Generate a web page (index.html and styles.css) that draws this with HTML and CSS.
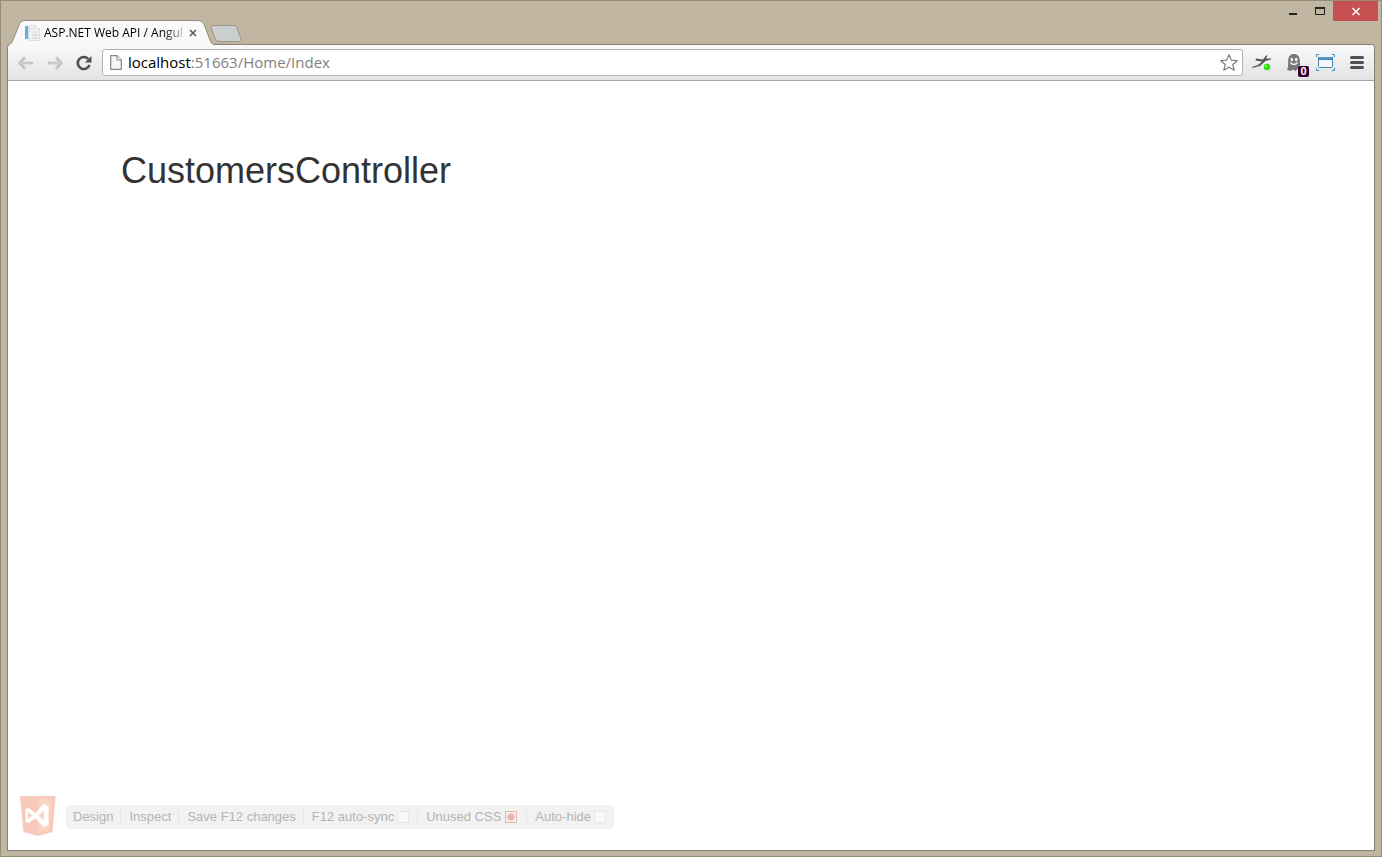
FILE: index.html
```html
<!DOCTYPE html>
<html lang="en">
<head>
<meta charset="utf-8">
<title>ASP.NET Web API / Angular</title>
<link rel="stylesheet" href="styles.css">
</head>
<body>
<div class="window">
  <header class="titlebar">
    <div class="tab">
      <svg class="tab-shape" viewBox="0 0 206 25" width="206" height="25" aria-hidden="true">
        <path d="M0 25C3 24 4 23 5 20L11 5Q12.500 .5 17 .5H190Q194.500 .5 196 4L202 20Q203 24 206 24.500V25Z" fill="#f9f9f9"/>
        <path d="M0 24.500C3 24 4 23 5 20L11 5Q12.500 .5 17 .5H190Q194.500 .5 196 4L202 20Q203 24 206 24.500" fill="none" stroke="#918a78"/>
      </svg>
      <svg class="favicon" viewBox="0 0 16 16" width="16" height="16" aria-hidden="true">
        <path d="M1 1H4V14H1Z" fill="#6aaed5"/><path d="M4 1h2v13H4z" fill="#d3e4ed"/>
        <path d="M5.500 .5H11.500V3.500H15.500V15.500H5.500Z" fill="#f1f1f1" stroke="#dedede"/>
        <path d="M7 4h3M8 7h6" stroke="#d8dadb"/><path d="M8 10h6M8 13h6" stroke="#c4c8ca"/><path d="M6 7v6" stroke="#fff"/>
      </svg>
      <span class="tab-title">ASP.NET Web API / Angul</span>
      <button class="tab-close" aria-label="Close tab"><svg viewBox="0 0 8 8" width="8" height="8"><path d="M1 1L7 7M7 1L1 7" stroke="#5a5a5a" stroke-width="1.600"/></svg></button>
    </div>
    <button class="new-tab" aria-label="New tab"><svg viewBox="0 0 32 17" width="32" height="17"><path d="M3 .5H23Q26 .5 27 3L31 14Q31.500 16 29.500 16.500H9Q6.500 16.500 5.500 14L1 3Q.5 .5 3 .5Z" fill="#cbcfd0" stroke="#9c9686"/></svg></button>
    <div class="controls">
      <button aria-label="Minimize"><svg viewBox="0 0 10 10" width="10" height="10"><path d="M1 8H9" stroke="#222" stroke-width="2"/></svg></button>
      <button aria-label="Maximize"><svg viewBox="0 0 10 10" width="10" height="10"><path d="M.5 1V8.500H9.500V1" fill="none" stroke="#222"/><path d="M0 2H10" stroke="#222" stroke-width="2"/></svg></button>
      <button class="close" aria-label="Close"><svg viewBox="0 0 10 10" width="10" height="10"><path d="M1.500 2L8.500 9M8.500 2L1.500 9" stroke="#fff" stroke-width="1.500"/></svg></button>
    </div>
  </header>
  <div class="frame">
    <nav class="toolbar">
      <button class="nav" aria-label="Back"><svg viewBox="0 0 16 14" width="16" height="14"><path d="M7 1.500L1.700 7L7 12.500M2 7H15" fill="none" stroke="#b8b8b8" stroke-width="2.600"/><path d="M7 2L2.200 7L7 12M3 7H14.500" fill="none" stroke="#dadada" stroke-width="1"/></svg></button>
      <button class="nav" aria-label="Forward"><svg viewBox="0 0 16 14" width="16" height="14"><path d="M9 1.500L14.300 7L9 12.500M14 7H1" fill="none" stroke="#b8b8b8" stroke-width="2.600"/><path d="M9 2L13.800 7L9 12M13 7H1.500" fill="none" stroke="#dadada" stroke-width="1"/></svg></button>
      <button class="nav" aria-label="Reload"><svg viewBox="0 0 16 16" width="16" height="16"><path d="M12.300 4A6 6 0 1 0 13.500 10" fill="none" stroke="#505050" stroke-width="2.600"/><path d="M15.500 1V7.500H8.800Z" fill="#505050"/></svg></button>
      <div class="address">
        <svg viewBox="0 0 12 15" width="12" height="15" aria-hidden="true"><path d="M.7 .7H7L11.300 5V14.300H.7Z" fill="#f7f7f7" stroke="#858585" stroke-width="1.200"/><path d="M7 .7V5H11.300" fill="#fff" stroke="#858585"/></svg>
        <a class="url" href="#"><span class="host">localhost</span>:51663/Home/Index</a>
        <button class="star" aria-label="Bookmark"><svg viewBox="0 0 18 17" width="18" height="17"><path d="M9 .8L11.400 6.200L17.300 6.700L12.800 10.500L14.200 16.300L9 13.200L3.800 16.300L5.200 10.500L.7 6.700L6.600 6.200Z" fill="#fff" stroke="#7d7d7d" stroke-width="1.200" stroke-linejoin="round"/></svg></button>
      </div>
      <div class="extensions">
        <button aria-label="Extension"><svg viewBox="0 0 20 18" width="20" height="18"><path d="M0 13L6 11L10 7.500L3.500 6.500L4 4.500L11 5.600L14 1.500H15.500L14 4.500L19 4.500V5.500L13.500 7L8 12L0 14Z" fill="#555"/><circle cx="15" cy="13" r="3.200" fill="#2ee00c"/><circle cx="14" cy="12.300" r="1" fill="#9bff83"/></svg></button>
        <button class="ghost" aria-label="Ghostery, 0 found"><svg viewBox="0 0 14 17" width="14" height="17"><path d="M0 16C1.500 13 1 10 1.200 6C1.500 2 4 0 7 0S12.500 2 12.800 6C13 10 13 13 14 16L10.500 15L8.500 17L6 15.500L3.500 17Z" fill="#777"/><ellipse cx="4.800" cy="5.500" rx="1.300" ry="1.700" fill="#fff"/><ellipse cx="9.200" cy="5.500" rx="1.300" ry="1.700" fill="#fff"/><path d="M3.500 8.500Q7 12.500 10.500 8.500" fill="none" stroke="#fff" stroke-width="1.200"/></svg><span class="badge">0</span></button>
        <button aria-label="Capture"><svg viewBox="0 0 19 17" width="19" height="17"><path d="M.5 3V.5H3M16 .5H18.500V3M18.500 14V16.500H16M3 16.500H.5V14" fill="none" stroke="#4486b5"/><rect x="2.500" y="3.500" width="14" height="10" rx="1" fill="#f3f6fa" stroke="#4486b5"/><path d="M2 4.500H17" stroke="#4486b5" stroke-width="3"/><path d="M3 4H16" stroke="#73a9d0"/></svg></button>
        <button aria-label="Menu"><svg viewBox="0 0 14 13" width="14" height="13"><path d="M1.500 1.500H12.500M1.500 6.500H12.500M1.500 11.500H12.500" stroke="#505050" stroke-width="3" stroke-linecap="round"/></svg></button>
      </div>
    </nav>
    <main class="page">
      <div class="container"><h1>CustomersController</h1></div>
      <footer class="browser-link">
        <svg viewBox="0 0 36 40" width="36" height="40" role="img" aria-label="Browser Link">
          <path d="M0 0H35.500L32.500 36L18 40L3.500 36Z" fill="#f8cabd"/><path d="M18 3H32L29.500 34L18 37Z" fill="#fbd3c1"/>
          <path d="M5.500 13L8.500 12L15.500 17L23.500 8L28.500 10V29L23.500 31L15.500 22.500L8.500 27L5.500 26ZM8 16V23L12 19.500ZM24 14.500L18.500 19.500L24 24.500Z" fill="#fff" fill-rule="evenodd"/>
        </svg>
        <div class="link-bar">
          <button>Design</button>
          <button>Inspect</button>
          <button>Save F12 changes</button>
          <label>F12 auto-sync<input type="checkbox"></label>
          <label>Unused CSS<input class="record" type="checkbox" checked></label>
          <label>Auto-hide<input type="checkbox"></label>
        </div>
      </footer>
    </main>
  </div>
</div>
</body>
</html>
```
FILE: styles.css
```css
* { box-sizing: border-box; }
body { margin: 0; }
svg { display: block; flex: none; }
button { margin: 0; padding: 0; border: 0; background: none; font: inherit; color: inherit; }

.window {
  min-height: 100vh;
  display: flex;
  flex-direction: column;
  padding: 0 6px 5px;
  border: 1px solid #958c78;
  background: #c1b6a1;
}

.titlebar { display: flex; height: 43px; }
.tab {
  position: relative;
  z-index: 1;
  display: flex;
  align-items: center;
  width: 206px;
  height: 25px;
  margin: 19px 0 0 1px;
  padding: 0 11px 0 16px;
  font: 12px/16px "Open Sans", sans-serif;
  color: #000;
}
.tab-shape { position: absolute; left: 0; top: 0; }
.favicon { position: relative; }
.tab-title {
  position: relative;
  flex: 1;
  margin-left: 4px;
  white-space: nowrap;
  -webkit-mask-image: linear-gradient(to right, #000 120px, #0004 138px);
  mask-image: linear-gradient(to right, #000 120px, #0004 138px);
}
.tab-close { position: relative; margin: 0 6px 0 6px; }
.new-tab { align-self: flex-start; margin: 24px 0 0 -4px; }

.controls { display: flex; align-items: flex-start; margin: 0 -3px 0 auto; }
.controls button { display: grid; place-items: center; width: 27px; height: 20px; }
.controls .close { width: 45px; background: #c75050; }

.frame {
  flex: 1;
  display: flex;
  flex-direction: column;
  border: 1px solid #8b8472;
  border-radius: 4px 4px 0 0;
  background: #fff;
  box-shadow: 0 0 1px #8b8472;
}

.toolbar {
  display: flex;
  align-items: center;
  height: 36px;
  padding: 0 10px;
  border-bottom: 1px solid #a6a6a6;
  border-radius: 3px 3px 0 0;
  background: linear-gradient(#f9f9f9, #e3e3e3);
}
.nav { display: grid; place-items: center; width: 16px; height: 24px; margin-right: 13px; }
.nav + .nav + .nav { margin-right: 10px; }
.address {
  flex: 1;
  display: flex;
  align-items: center;
  height: 27px;
  padding: 0 4px 0 7px;
  border: 1px solid #b4b4b4;
  border-radius: 3px;
  background: #fff;
}
.url {
  flex: 1;
  margin-left: 6px;
  padding-bottom: 2px;
  font: 15px/20px "Open Sans", sans-serif;
  color: #808080;
  text-decoration: none;
}
.host { color: #000; }
.extensions { display: flex; align-items: center; margin-left: 9px; }
.extensions button + button { margin-left: 15px; }
.ghost { position: relative; }
.badge {
  position: absolute;
  left: 11px;
  top: 12px;
  width: 11px;
  height: 11px;
  border-radius: 2px;
  background: #330033;
  color: #fff;
  font: bold 11px/11px "Liberation Sans", Arial, sans-serif;
  text-align: center;
}

.page { flex: 1; display: flex; flex-direction: column; font-family: "Liberation Sans", Arial, sans-serif; }
.container { width: 100%; max-width: 1170px; margin: 0 auto; padding: 70px 15px 0; }
h1 { margin: 0; font-size: 36px; line-height: 40px; font-weight: 400; color: #333; }

.browser-link { display: flex; align-items: flex-end; gap: 10px; margin: auto 12px 14px; }
.link-bar {
  display: flex;
  align-items: center;
  height: 24px;
  margin-bottom: 7px;
  border-radius: 5px;
  background: #f2f2f2;
  font-size: 13px;
  line-height: 16px;
  color: #b4b4b4;
}
.link-bar > * { display: flex; align-items: center; padding: 0 7px 0 8px; }
.link-bar > :first-child { padding-left: 7px; }
.link-bar > * + * { border-left: 1px solid #e6e6e6; }
.link-bar label { padding-right: 8px; }
.link-bar input {
  appearance: none;
  width: 12px;
  height: 12px;
  margin: 0 0 0 3px;
  border: 1px solid #e6e6e6;
  border-radius: 2px;
  background: #f9f9f9;
}
.link-bar .record {
  margin: 0 1px 0 4px;
  border-color: #e5b5ad;
  border-radius: 0;
  background: radial-gradient(circle, #e5b5ad 3px, #f7eeec 4px);
}
```
